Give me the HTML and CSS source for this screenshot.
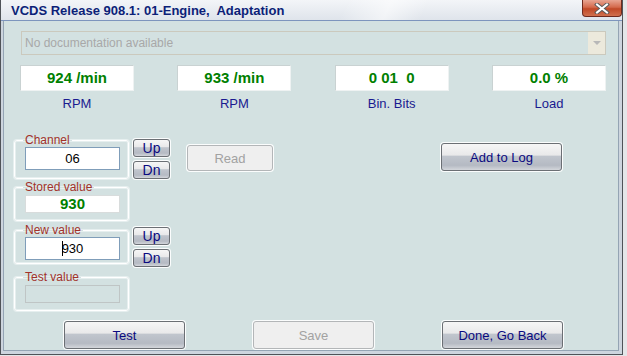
FILE: index.html
```html
<!DOCTYPE html>
<html lang="en">
<head>
  <meta charset="UTF-8" />
  <title>VCDS Adaptation</title>
  <link rel="stylesheet" href="styles.css">
</head>
<body>
  <div class="window">
    <!-- Title bar -->
    <div class="titlebar">
      <span class="title">VCDS Release 908.1: 01-Engine,&nbsp; Adaptation</span>
      <button class="close" aria-label="Close">
        <svg width="18" height="11" viewBox="0 0 18 11">
          <path d="M4 1.5 L14 9.5 M14 1.5 L4 9.5" stroke="#5a5a5a" stroke-width="4" stroke-linecap="square" />
          <path d="M4 1.5 L14 9.5 M14 1.5 L4 9.5" stroke="#ffffff" stroke-width="2" stroke-linecap="square" />
        </svg>
      </button>
    </div>

    <div class="client">
      <!-- Documentation combo -->
      <div class="combo">
        <span>No documentation available</span>
        <span class="combo-arrow">
          <svg width="8" height="5" viewBox="0 0 8 5"><path d="M0 0 H8 L4 4 Z" fill="#b8b8b8" /></svg>
        </span>
      </div>

      <!-- Measuring block readouts -->
      <div class="readouts">
        <div class="readout"><div class="readout-box">924 /min</div><div class="readout-label">RPM</div></div>
        <div class="readout"><div class="readout-box">933 /min</div><div class="readout-label">RPM</div></div>
        <div class="readout"><div class="readout-box">0 01&nbsp;&nbsp;0</div><div class="readout-label">Bin. Bits</div></div>
        <div class="readout"><div class="readout-box">0.0 %</div><div class="readout-label">Load</div></div>
      </div>

      <!-- Channel row -->
      <div class="row row-channel">
        <fieldset class="group group-channel">
          <legend>Channel</legend>
          <div class="field field-edit">06</div>
        </fieldset>
        <div class="spin spin-channel">
          <button class="btn btn-small">Up</button>
          <button class="btn btn-small">Dn</button>
        </div>
        <button class="btn btn-read" disabled>Read</button>
        <button class="btn btn-log">Add to Log</button>
      </div>

      <!-- Stored value -->
      <div class="row">
        <fieldset class="group group-stored">
          <legend>Stored value</legend>
          <div class="field field-stored">930</div>
        </fieldset>
      </div>

      <!-- New value row -->
      <div class="row row-new">
        <fieldset class="group group-new">
          <legend>New value</legend>
          <div class="field field-edit"><span class="caret"></span>930</div>
        </fieldset>
        <div class="spin spin-new">
          <button class="btn btn-small">Up</button>
          <button class="btn btn-small">Dn</button>
        </div>
      </div>

      <!-- Test value -->
      <div class="row">
        <fieldset class="group group-test">
          <legend>Test value</legend>
          <div class="field field-disabled"></div>
        </fieldset>
      </div>

      <!-- Bottom buttons -->
      <div class="actions">
        <button class="btn btn-wide">Test</button>
        <button class="btn btn-wide" disabled>Save</button>
        <button class="btn btn-wide">Done, Go Back</button>
      </div>
    </div>
  </div>
</body>
</html>
```

FILE: styles.css
```css
/* Page reset */
html, body {
  margin: 0;
  padding: 0;
}

body {
  background: #e4e6e8;
  font-family: 'Liberation Sans', Arial, sans-serif;
  width: 627px;
  height: 356px;
  overflow: hidden;
}

/* Window frame */
.window {
  width: 623px;
  height: 355px;
  box-sizing: border-box;
  border: 1px solid #4f5358;
  border-top: none;
  background: #cdd5de;
  display: flex;
  flex-direction: column;
}

/* Title bar */
.titlebar {
  height: 20px;
  flex: none;
  display: flex;
  align-items: flex-start;
  background:
    linear-gradient(115deg, transparent 55%, rgba(255,255,255,0.55) 62%, transparent 68%),
    linear-gradient(180deg, #f3f5f8 0%, #dfe4eb 100%);
  border-bottom: 1px solid #7d95bd;
}

.title {
  margin: 3px 0 0 10px;
  font-family: 'Liberation Sans', Arial, sans-serif;
  font-weight: bold;
  font-size: 13px;
  color: #0c1f78;
  flex: 1;
  white-space: nowrap;
}

.close {
  width: 40px;
  height: 17px;
  margin-right: 0;
  padding: 0;
  border: 1px solid #6e2a1e;
  border-top: none;
  border-radius: 0 0 4px 4px;
  background: linear-gradient(180deg, #e8a592 0%, #d46a4c 45%, #c04826 55%, #d0704e 100%);
  display: flex;
  align-items: center;
  justify-content: center;
}

/* Client area */
.client {
  flex: 1;
  margin: 0 3px 3px 2px;
  background: #d3e1e1;
  border: 1px solid #94a4b4;
  border-top: none;
  padding-top: 10px;
}

/* Combo box */
.combo {
  margin-left: 17px;
  width: 585px;
  height: 24px;
  box-sizing: border-box;
  border: 1px solid #cbc9bd;
  display: flex;
  align-items: center;
  justify-content: space-between;
  font-size: 12px;
  color: #a8a8a8;
  padding-left: 3px;
}

.combo-arrow {
  width: 17px;
  height: 22px;
  background: #ece9dc;
  display: flex;
  align-items: center;
  justify-content: center;
}

/* Readouts */
.readouts {
  margin: 10px 0 0 16px;
  width: 586px;
  display: flex;
  justify-content: space-between;
}

.readout {
  width: 114px;
  text-align: center;
}

.readout-box {
  height: 26px;
  box-sizing: border-box;
  background: #fff;
  border: 1px solid #c9d2d2;
  border-right-color: #eef2f2;
  border-bottom-color: #eef2f2;
  color: #008000;
  font-weight: bold;
  font-size: 15px;
  line-height: 24px;
}

.readout-label {
  margin-top: 5px;
  font-size: 13px;
  line-height: 15px;
  color: #1a1a90;
}

/* Rows of the lower section */
.row {
  display: flex;
  align-items: flex-start;
}

.row-channel {
  margin-top: 22px;
}

.row-new {
  margin-top: 2px;
}

/* Group boxes */
.group {
  margin: 0 0 0 10px;
  padding: 0 8px 0 10px;
  width: 115px;
  box-sizing: border-box;
  min-width: 0;
  border: 1px solid #fff;
  border-radius: 3px;
  box-shadow: inset 0 0 0 1px #e6efef, 0 0 0 1px #e6efef;
}

.group legend {
  padding: 0 2px;
  margin-left: -2px;
  font-size: 12px;
  line-height: 14px;
  color: #a2322a;
}

.group-channel {
  padding-bottom: 8px;
}

.group-stored {
  margin-top: 1px;
  padding-top: 1px;
  padding-bottom: 7px;
}

.group-new {
  padding-bottom: 3px;
}

.group-test {
  margin-top: 3px;
  padding-top: 1px;
  padding-bottom: 7px;
}

/* Edit fields */
.field {
  width: 95px;
  box-sizing: border-box;
  text-align: center;
  font-size: 13px;
}

.field-edit {
  height: 23px;
  line-height: 21px;
  background: #fff;
  border: 1px solid #7f9db9;
  color: #000;
}

.field-stored {
  height: 18px;
  line-height: 16px;
  background: #fff;
  border: 1px solid #d8dcdc;
  color: #008000;
  font-weight: bold;
  font-size: 15px;
}

.field-disabled {
  height: 18px;
  border: 1px solid #bfc5c5;
}

.caret {
  display: inline-block;
  width: 1px;
  height: 15px;
  background: #000;
  vertical-align: -3px;
  margin-right: -1px;
}

/* Buttons */
.btn {
  font-family: 'Liberation Sans', Arial, sans-serif;
  font-size: 13px;
  color: #0a0a80;
  padding: 0;
  border: 1px solid #6b6f74;
  border-radius: 3px;
  background: linear-gradient(180deg, #f6f6f6 0%, #e9e9ea 42%, #c0c5cd 48%, #b5bac3 82%, #d3d6db 100%);
  box-shadow: 0 0 0 1px #fbfdfd;
}

.btn:disabled {
  color: #a2a2a2;
  background: #efefef;
  border-color: #b3b6b8;
}

.spin {
  margin-left: 4px;
  display: flex;
  flex-direction: column;
  gap: 4px;
}

.spin-channel {
  margin-top: 6px;
}

.spin-new {
  margin-top: 4px;
}

.btn-small {
  width: 37px;
  height: 18px;
  line-height: 14px;
  font-size: 14px;
}

.btn-read {
  margin: 12px 0 0 17px;
  width: 86px;
  height: 26px;
}

.btn-log {
  margin: 10px 0 0 168px;
  width: 121px;
  height: 28px;
}

.actions {
  margin: 10px 0 0 60px;
  display: flex;
  gap: 68px;
}

.btn-wide {
  width: 121px;
  height: 28px;
}
```
